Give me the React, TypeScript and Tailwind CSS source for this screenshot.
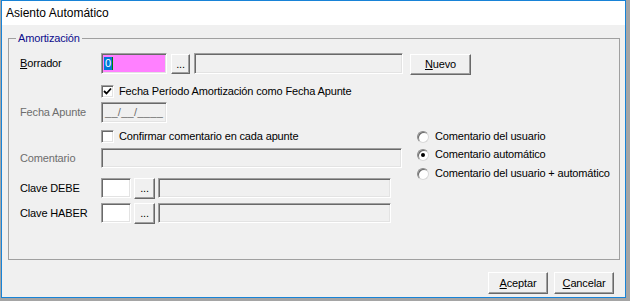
import React from 'react';

const sunken =
  'border border-t-[#a0a0a0] border-l-[#a0a0a0] border-r-white border-b-white shadow-[inset_1px_1px_0_#696969,inset_-1px_-1px_0_#e3e3e3]';
const raised =
  'border border-t-white border-l-white border-r-[#696969] border-b-[#696969] shadow-[inset_-1px_-1px_0_#a0a0a0] bg-[#f0f0f0] flex items-center justify-center leading-none';

const Check = ({ checked }: { checked?: boolean }) => (
  <div className={`w-[13px] h-[13px] shrink-0 bg-white flex items-center justify-center ${sunken}`}>
    {checked && (
      <svg width="9" height="9" viewBox="0 0 9 9">
        <path d="M1 4 L3.5 6.5 L8 1.5" fill="none" stroke="#000" strokeWidth="1.8" />
      </svg>
    )}
  </div>
);

const Radio = ({ checked, label }: { checked?: boolean; label: string }) => (
  <div className="flex items-center h-[13px]">
    <div className="w-[12px] h-[12px] rounded-full bg-white border border-t-[#8a8a8a] border-l-[#8a8a8a] border-r-[#d8d8d8] border-b-[#d8d8d8] flex items-center justify-center shadow-[inset_1px_1px_0_#696969]">
      {checked && <div className="w-[4px] h-[4px] rounded-full bg-black" />}
    </div>
    <span className="ml-[6px] leading-[13px]">{label}</span>
  </div>
);

export default function App() {
  return (
    <div className="w-[630px] h-[301px] bg-[#a5a5a5] overflow-hidden font-['Liberation_Sans',Arial,sans-serif] text-[11px] tracking-[-0.15px] text-black">
      <div className="ml-px w-[625px] h-[298px] border border-[#1883d7] bg-[#f0f0f0] flex flex-col">
        {/* title bar */}
        <div className="h-[24px] bg-white pl-[4px] text-[12px] tracking-normal leading-[24px]">Asiento Automático</div>

        <fieldset className="ml-[6px] mt-[7px] w-[612px] h-[228px] border border-[#a0a0a0]">
          <legend className="ml-[7px] px-[2px] leading-[13px] text-[#0c0c8c]">Amortización</legend>
          <div className="pl-[11px]">
            {/* Borrador */}
            <div className="mt-[8px] flex items-start">
              <span className="w-[81px] leading-[21px]">
                <u>B</u>orrador
              </span>
              <div className={`w-[66px] h-[21px] bg-[#ff80ff] flex items-center pl-[2px] ${sunken}`}>
                <span className="bg-[#0078d7] text-white leading-[13px] px-px">0</span>
                <span className="w-px h-[13px] bg-[#008000]" />
              </div>
              <button className={`ml-[4px] mt-px w-[19px] h-[20px] ${raised}`}>...</button>
              <div className={`ml-[4px] w-[209px] h-[21px] ${sunken}`} />
              <button className={`ml-[7px] mt-px w-[61px] h-[21px] ${raised}`}>
                <u>N</u>uevo
              </button>
            </div>

            {/* Fecha periodo checkbox */}
            <div className="mt-[10px] flex items-center h-[13px] pl-[81px]">
              <Check checked />
              <span className="ml-[5px] leading-[13px]">Fecha Período Amortización como Fecha Apunte</span>
            </div>

            {/* Fecha Apunte */}
            <div className="mt-[4px] flex items-start">
              <span className="w-[81px] leading-[21px] text-[#6d6d6d]">Fecha Apunte</span>
              <div className={`w-[66px] h-[21px] pl-[3px] leading-[19px] tracking-[0.3px] text-[#6d6d6d] ${sunken}`}>__/__/____</div>
            </div>

            <div className="mt-[7px] flex items-start">
              <div className="w-[382px]">
                <div className="flex items-center h-[13px] pl-[81px]">
                  <Check />
                  <span className="ml-[5px] leading-[13px]">Confirmar comentario en cada apunte</span>
                </div>

                <div className="mt-[5px] flex items-start">
                  <span className="w-[81px] leading-[20px] text-[#6d6d6d]">Comentario</span>
                  <div className={`w-[302px] h-[20px] ${sunken}`} />
                </div>

                <div className="mt-[10px] flex items-start">
                  <span className="w-[81px] leading-[20px]">Clave DEBE</span>
                  <div className={`w-[30px] h-[20px] bg-white ${sunken}`} />
                  <button className={`ml-[3px] w-[21px] h-[21px] ${raised}`}>...</button>
                  <div className={`ml-[3px] w-[233px] h-[20px] ${sunken}`} />
                </div>

                <div className="mt-[4px] flex items-start">
                  <span className="w-[81px] leading-[20px]">Clave HABER</span>
                  <div className={`w-[30px] h-[20px] bg-white ${sunken}`} />
                  <button className={`ml-[3px] w-[21px] h-[21px] ${raised}`}>...</button>
                  <div className={`ml-[3px] w-[233px] h-[20px] ${sunken}`} />
                </div>
              </div>

              <div className="ml-[15px] flex flex-col">
                <Radio label="Comentario del usuario" />
                <div className="mt-[5px]">
                  <Radio checked label="Comentario automático" />
                </div>
                <div className="mt-[6px]">
                  <Radio label="Comentario del usuario + automático" />
                </div>
              </div>
            </div>
          </div>
        </fieldset>

        <div className="mt-[12px] flex justify-end gap-[6px] pr-[11px]">
          <button className={`w-[60px] h-[22px] ${raised}`}>
            <u>A</u>ceptar
          </button>
          <button className={`w-[60px] h-[22px] ${raised}`}>
            <u>C</u>ancelar
          </button>
        </div>
      </div>
    </div>
  );
}
